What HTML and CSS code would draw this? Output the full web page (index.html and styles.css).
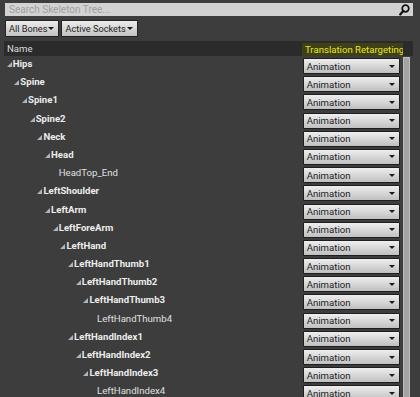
FILE: index.html
```html
<!DOCTYPE html>
<html>
<head>
<meta charset="utf-8">
<link rel="stylesheet" href="styles.css">
</head>
<body>
<div class="panel">
  <div class="search">
    <span class="placeholder">Search Skeleton Tree...</span>
    <svg class="search-icon" width="11" height="12" viewBox="0 0 11 12"><circle cx="6.5" cy="4.5" r="3.3" fill="none" stroke="#111" stroke-width="1.7"/><line x1="4.2" y1="7" x2="1.2" y2="10.5" stroke="#111" stroke-width="2.2" stroke-linecap="round"/></svg>
  </div>
  <div class="toolbar">
    <div class="btn">All Bones<span class="caret"></span></div>
    <div class="btn">Active Sockets<span class="caret"></span></div>
  </div>
  <div class="tree">
    <div class="header">
      <div class="h-name">Name</div>
      <div class="h-retarget">Translation Retargeting</div>
    </div>
    <div class="body">
      <div class="rows">
        <div class="row"><div class="name bold" style="--d:0"><span class="exp"></span>Hips</div><div class="combo">Animation<span class="caret"></span></div></div>
        <div class="row"><div class="name bold" style="--d:1"><span class="exp"></span>Spine</div><div class="combo">Animation<span class="caret"></span></div></div>
        <div class="row"><div class="name bold" style="--d:2"><span class="exp"></span>Spine1</div><div class="combo">Animation<span class="caret"></span></div></div>
        <div class="row"><div class="name bold" style="--d:3"><span class="exp"></span>Spine2</div><div class="combo">Animation<span class="caret"></span></div></div>
        <div class="row"><div class="name bold" style="--d:4"><span class="exp"></span>Neck</div><div class="combo">Animation<span class="caret"></span></div></div>
        <div class="row"><div class="name bold" style="--d:5"><span class="exp"></span>Head</div><div class="combo">Animation<span class="caret"></span></div></div>
        <div class="row"><div class="name leaf" style="--d:6"><span class="noexp"></span>HeadTop_End</div><div class="combo">Animation<span class="caret"></span></div></div>
        <div class="row"><div class="name bold" style="--d:4"><span class="exp"></span>LeftShoulder</div><div class="combo">Animation<span class="caret"></span></div></div>
        <div class="row"><div class="name bold" style="--d:5"><span class="exp"></span>LeftArm</div><div class="combo">Animation<span class="caret"></span></div></div>
        <div class="row"><div class="name bold" style="--d:6"><span class="exp"></span>LeftForeArm</div><div class="combo">Animation<span class="caret"></span></div></div>
        <div class="row"><div class="name bold" style="--d:7"><span class="exp"></span>LeftHand</div><div class="combo">Animation<span class="caret"></span></div></div>
        <div class="row"><div class="name bold" style="--d:8"><span class="exp"></span>LeftHandThumb1</div><div class="combo">Animation<span class="caret"></span></div></div>
        <div class="row"><div class="name bold" style="--d:9"><span class="exp"></span>LeftHandThumb2</div><div class="combo">Animation<span class="caret"></span></div></div>
        <div class="row"><div class="name bold" style="--d:10"><span class="exp"></span>LeftHandThumb3</div><div class="combo">Animation<span class="caret"></span></div></div>
        <div class="row"><div class="name leaf" style="--d:11"><span class="noexp"></span>LeftHandThumb4</div><div class="combo">Animation<span class="caret"></span></div></div>
        <div class="row"><div class="name bold" style="--d:8"><span class="exp"></span>LeftHandIndex1</div><div class="combo">Animation<span class="caret"></span></div></div>
        <div class="row"><div class="name bold" style="--d:9"><span class="exp"></span>LeftHandIndex2</div><div class="combo">Animation<span class="caret"></span></div></div>
        <div class="row"><div class="name bold" style="--d:10"><span class="exp"></span>LeftHandIndex3</div><div class="combo">Animation<span class="caret"></span></div></div>
        <div class="row"><div class="name leaf" style="--d:11"><span class="noexp"></span>LeftHandIndex4</div><div class="combo">Animation<span class="caret"></span></div></div>
      </div>
      <div class="scrollbar"><div class="thumb"></div></div>
    </div>
  </div>
</div>
</body>
</html>
```

FILE: styles.css
```css
html, body {
  margin: 0;
  padding: 0;
  background: #3d3d3d;
  height: 100%;
  overflow: hidden;
}
.panel {
  font-family: Roboto, "Liberation Sans", sans-serif;
  font-size: 9.6px;
  padding: 3px 7px 0 4px;
  display: flex;
  flex-direction: column;
}
.search {
  height: 13px;
  margin-left: 1px;
  background: #d2d2d2;
  display: flex;
  align-items: center;
  justify-content: space-between;
  padding: 0 3px 0 4px;
}
.placeholder {
  color: #a0a0a0;
  font-size: 10px;
  line-height: 12px;
}
.search-icon {
  display: block;
}
.toolbar {
  margin-top: 4px;
  display: flex;
  gap: 2px;
  margin-left: 1px;
}
.btn {
  height: 15px;
  border: 1px solid #222;
  background: linear-gradient(#ececec, #c2c2c2);
  color: #1c1c1c;
  display: flex;
  align-items: center;
  padding: 0 4px 0 3px;
  line-height: 11px;
  font-size: 9.2px;
  border-radius: 1px;
}
.btn .caret {
  margin-left: 1px;
}
.caret {
  display: inline-block;
  width: 0;
  height: 0;
  border-left: 3px solid transparent;
  border-right: 3px solid transparent;
  border-top: 3px solid #1a1a1a;
}
.tree {
  margin-top: 4px;
  display: flex;
  flex-direction: column;
}
.header {
  height: 15px;
  background: #2b2b2b;
  display: flex;
  align-items: flex-end;
}
.h-name {
  flex: 1;
  color: #dcdcdc;
  line-height: 13px;
  padding-left: 3px;
  align-self: center;
}
.h-retarget {
  width: 101px;
  margin-right: 10px;
  height: 13px;
  background: #3f3f18;
  color: #e6e62a;
  line-height: 13px;
  padding-left: 3px;
  white-space: nowrap;
  overflow: hidden;
  box-sizing: border-box;
  font-size: 9.6px;
}
.body {
  display: flex;
}
.rows {
  flex: 1;
  padding-top: 1px;
}
.row {
  height: 18.2px;
  display: flex;
  align-items: flex-start;
}
.name {
  flex: 1;
  display: flex;
  align-items: flex-end;
  line-height: 11px;
  padding-left: calc(var(--d) * 7.67px + 2.7px);
  white-space: nowrap;
  margin-top: 1px;
}
.name.bold {
  font-weight: 700;
  color: #ececec;
}
.name.leaf {
  color: #e0e0e0;
}
.exp {
  width: 0;
  height: 0;
  border-style: solid;
  border-width: 0 0 5px 5px;
  border-color: transparent transparent #b4b4b4 transparent;
  margin-right: 1px;
  margin-bottom: 2px;
}
.noexp {
  width: 6px;
}
.combo {
  width: 97.3px;
  height: 16px;
  margin-top: 1px;
  box-sizing: border-box;
  border: 1px solid #1e1e1e;
  background: linear-gradient(#eeeeee, #c0c0c0);
  color: #1e1e1e;
  display: flex;
  align-items: center;
  justify-content: space-between;
  padding: 0 4px 0 3px;
  line-height: 11px;
  border-radius: 1px;
}
.scrollbar {
  width: 7px;
  margin-left: 2.7px;
  margin-right: 3.3px;
  margin-top: 1px;
  background: #2e2e2e;
}
.thumb {
  height: 400px;
  background: #a3a3a3;
  border: 1px solid #bdbdbd;
  box-sizing: border-box;
}
```
